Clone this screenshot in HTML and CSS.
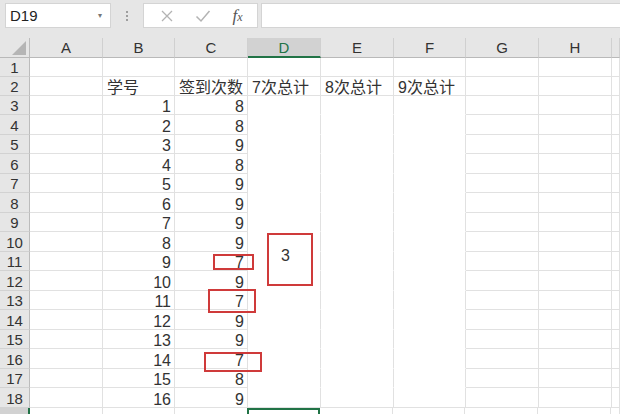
FILE: index.html
```html
<!DOCTYPE html>
<html lang="zh-CN">
<head>
    <meta charset="UTF-8">
    <title>D19</title>
    <link rel="stylesheet" href="styles.css">
</head>
<body>

    <!-- Barra de fórmulas -->
    <div class="toolbar">
        <div class="name-box">
            <span>D19</span>
            <span class="drop">&#9662;</span>
        </div>
        <div class="dots">
            <i></i><i></i><i></i>
        </div>
        <div class="fx-buttons">
            <svg width="14" height="14" viewBox="0 0 14 14"><path d="M2 2 L12 12 M12 2 L2 12" stroke="#b3b3b3" stroke-width="1.3" fill="none"/></svg>
            <svg width="16" height="14" viewBox="0 0 16 14"><path d="M1.5 7.5 L6 12 L14.5 2" stroke="#b3b3b3" stroke-width="1.5" fill="none"/></svg>
            <span class="fx">f<small>x</small></span>
        </div>
        <div class="formula"></div>
    </div>

    <!-- Planilha -->
    <div class="sheet">
        <div class="row head">
            <div class="rh corner"><div class="tri"></div></div>
            <div class="ch">A</div><div class="ch">B</div><div class="ch">C</div><div class="ch sel">D</div>
            <div class="ch">E</div><div class="ch">F</div><div class="ch">G</div><div class="ch">H</div><div class="ch"></div>
        </div>

        <div class="row h19"><div class="rh">1</div><div></div><div></div><div></div><div></div><div></div><div></div><div></div><div></div><div></div></div>
        <div class="row h19"><div class="rh">2</div><div></div><div>学号</div><div>签到次数</div><div>7次总计</div><div>8次总计</div><div>9次总计</div><div></div><div></div><div></div></div>
        <div class="row h19"><div class="rh">3</div><div></div><div class="num">1</div><div class="num">8</div><div class="w"></div><div class="w"></div><div class="w"></div><div></div><div></div><div></div></div>
        <div class="row h20"><div class="rh">4</div><div></div><div class="num">2</div><div class="num">8</div><div class="w"></div><div class="w"></div><div class="w"></div><div></div><div></div><div></div></div>
        <div class="row h19"><div class="rh">5</div><div></div><div class="num">3</div><div class="num">9</div><div class="w"></div><div class="w"></div><div class="w"></div><div></div><div></div><div></div></div>
        <div class="row h20"><div class="rh">6</div><div></div><div class="num">4</div><div class="num">8</div><div class="w"></div><div class="w"></div><div class="w"></div><div></div><div></div><div></div></div>
        <div class="row h19"><div class="rh">7</div><div></div><div class="num">5</div><div class="num">9</div><div class="w"></div><div class="w"></div><div class="w"></div><div></div><div></div><div></div></div>
        <div class="row h20"><div class="rh">8</div><div></div><div class="num">6</div><div class="num">9</div><div class="w"></div><div class="w"></div><div class="w"></div><div></div><div></div><div></div></div>
        <div class="row h19"><div class="rh">9</div><div></div><div class="num">7</div><div class="num">9</div><div class="w"></div><div class="w"></div><div class="w"></div><div></div><div></div><div></div></div>
        <div class="row h20"><div class="rh">10</div><div></div><div class="num">8</div><div class="num">9</div><div class="w"></div><div class="w"></div><div class="w"></div><div></div><div></div><div></div></div>
        <div class="row h19"><div class="rh">11</div><div></div><div class="num">9</div><div class="num">7</div><div class="w"></div><div class="w"></div><div class="w"></div><div></div><div></div><div></div></div>
        <div class="row h20"><div class="rh">12</div><div></div><div class="num">10</div><div class="num">9</div><div class="w"></div><div class="w"></div><div class="w"></div><div></div><div></div><div></div></div>
        <div class="row h19"><div class="rh">13</div><div></div><div class="num">11</div><div class="num">7</div><div class="w"></div><div class="w"></div><div class="w"></div><div></div><div></div><div></div></div>
        <div class="row h20"><div class="rh">14</div><div></div><div class="num">12</div><div class="num">9</div><div class="w"></div><div class="w"></div><div class="w"></div><div></div><div></div><div></div></div>
        <div class="row h19"><div class="rh">15</div><div></div><div class="num">13</div><div class="num">9</div><div class="w"></div><div class="w"></div><div class="w"></div><div></div><div></div><div></div></div>
        <div class="row h20"><div class="rh">16</div><div></div><div class="num">14</div><div class="num">7</div><div class="w"></div><div class="w"></div><div class="w"></div><div></div><div></div><div></div></div>
        <div class="row h19"><div class="rh">17</div><div></div><div class="num">15</div><div class="num">8</div><div class="w"></div><div class="w"></div><div class="w"></div><div></div><div></div><div></div></div>
        <div class="row h20"><div class="rh">18</div><div></div><div class="num">16</div><div class="num">9</div><div></div><div></div><div></div><div></div><div></div><div></div></div>
        <div class="row h20"><div class="rh cur"></div><div></div><div></div><div></div><div class="active"></div><div></div><div></div><div></div><div></div><div></div></div>

        <!-- Marcações em vermelho -->
        <div class="mark m1"></div>
        <div class="mark m2"></div>
        <div class="mark m3">3</div>
        <div class="mark m4"></div>
    </div>

</body>
</html>
```

FILE: styles.css
```css
* {
    margin: 0;
    padding: 0;
    box-sizing: border-box;
}

body {
    width: 620px;
    height: 414px;
    overflow: hidden;
    background-color: #fff;
    font-family: 'Liberation Sans', 'Noto Sans CJK SC', sans-serif;
    color: #333;
}

/* Barra de fórmulas */
.toolbar {
    height: 38px;
    background-color: #e6e6e6;
    display: flex;
    align-items: flex-start;
    padding: 3px 0 0 5px;
}

.name-box {
    width: 106px;
    height: 25px;
    background-color: #fff;
    border: 1px solid #d4d4d4;
    display: flex;
    align-items: center;
    justify-content: space-between;
    padding: 0 8px 0 4px;
    font-size: 15px;
    color: #222;
}

.drop {
    font-size: 8px;
    color: #777;
}

.dots {
    width: 32px;
    height: 25px;
    display: flex;
    flex-direction: column;
    align-items: center;
    justify-content: center;
    gap: 2px;
}

.dots i {
    width: 2px;
    height: 2px;
    background-color: #9e9e9e;
}

.fx-buttons {
    width: 115px;
    height: 25px;
    background-color: #fff;
    border: 1px solid #d4d4d4;
    display: flex;
    align-items: center;
    justify-content: space-around;
    padding: 0 4px 0 6px;
}

.fx {
    font-family: 'Liberation Serif', serif;
    font-style: italic;
    font-size: 17px;
    color: #555;
}

.fx small {
    font-size: 12px;
}

.formula {
    flex-grow: 1;
    height: 25px;
    margin-left: 3px;
    background-color: #fff;
    border: 1px solid #d4d4d4;
    border-right: none;
}

/* Planilha */
.sheet {
    position: relative;
}

.row {
    display: flex;
    height: 19px;
}

.row.h20 {
    height: 20px;
}

.row > div {
    flex: none;
    border-right: 1px solid #e1e1e1;
    border-bottom: 1px solid #e1e1e1;
    display: flex;
    align-items: flex-end;
    padding: 0 3px 0 4px;
    font-size: 16px;
    line-height: 15px;
    white-space: nowrap;
    overflow: hidden;
}

.row > div:nth-child(1) { width: 30px; }
.row > div:nth-child(2),
.row > div:nth-child(4),
.row > div:nth-child(5),
.row > div:nth-child(6),
.row > div:nth-child(8),
.row > div:nth-child(9) { width: 73px; }
.row > div:nth-child(3),
.row > div:nth-child(7) { width: 72px; }
.row > div:nth-child(10) { flex: 1; }

.row > .num {
    justify-content: flex-end;
}

.row > .w {
    border-bottom-color: #fff;
}

.row > .rh {
    background-color: #e6e6e6;
    border-right: 1px solid #bcbcbc;
    border-bottom: 1px solid #d2d2d2;
    justify-content: center;
    padding: 0 0 1px;
    font-size: 15px;
    color: #333;
}

.row > .rh.cur {
    background-color: #d2d2d2;
    border-right: 2px solid #217346;
}

/* Cabeçalho das colunas */
.row.head {
    height: 20px;
}

.row.head > div {
    background-color: #e6e6e6;
    border-right: 1px solid #d0d0d0;
    border-bottom: 1px solid #b9b9b9;
    justify-content: center;
    align-items: center;
    padding: 0;
    font-size: 15px;
    color: #333;
}

.row.head > .corner {
    justify-content: flex-end;
    align-items: flex-end;
    padding: 0 3px 2px 0;
    border-right: 1px solid #bcbcbc;
}

.tri {
    width: 14px;
    height: 14px;
    background-color: #b5b5b5;
    clip-path: polygon(100% 0, 100% 100%, 0 100%);
}

.row.head > .sel {
    background-color: #d2d2d2;
    border-bottom: 2px solid #217346;
    color: #217346;
}

.row > .active {
    border: 2px solid #217346;
    border-bottom: none;
    margin-left: -1px;
    width: 75px;
}

/* Marcações */
.mark {
    position: absolute;
    border: 2px solid #cf3a3a;
    font-size: 16px;
    color: #333;
}

.m1 { left: 213px; top: 216px; width: 41px; height: 16px; }
.m2 { left: 208px; top: 251px; width: 48px; height: 24px; }
.m3 { left: 267px; top: 195px; width: 46px; height: 53px; padding: 12px 0 0 12px; }
.m4 { left: 204px; top: 314px; width: 58px; height: 20px; }
```
